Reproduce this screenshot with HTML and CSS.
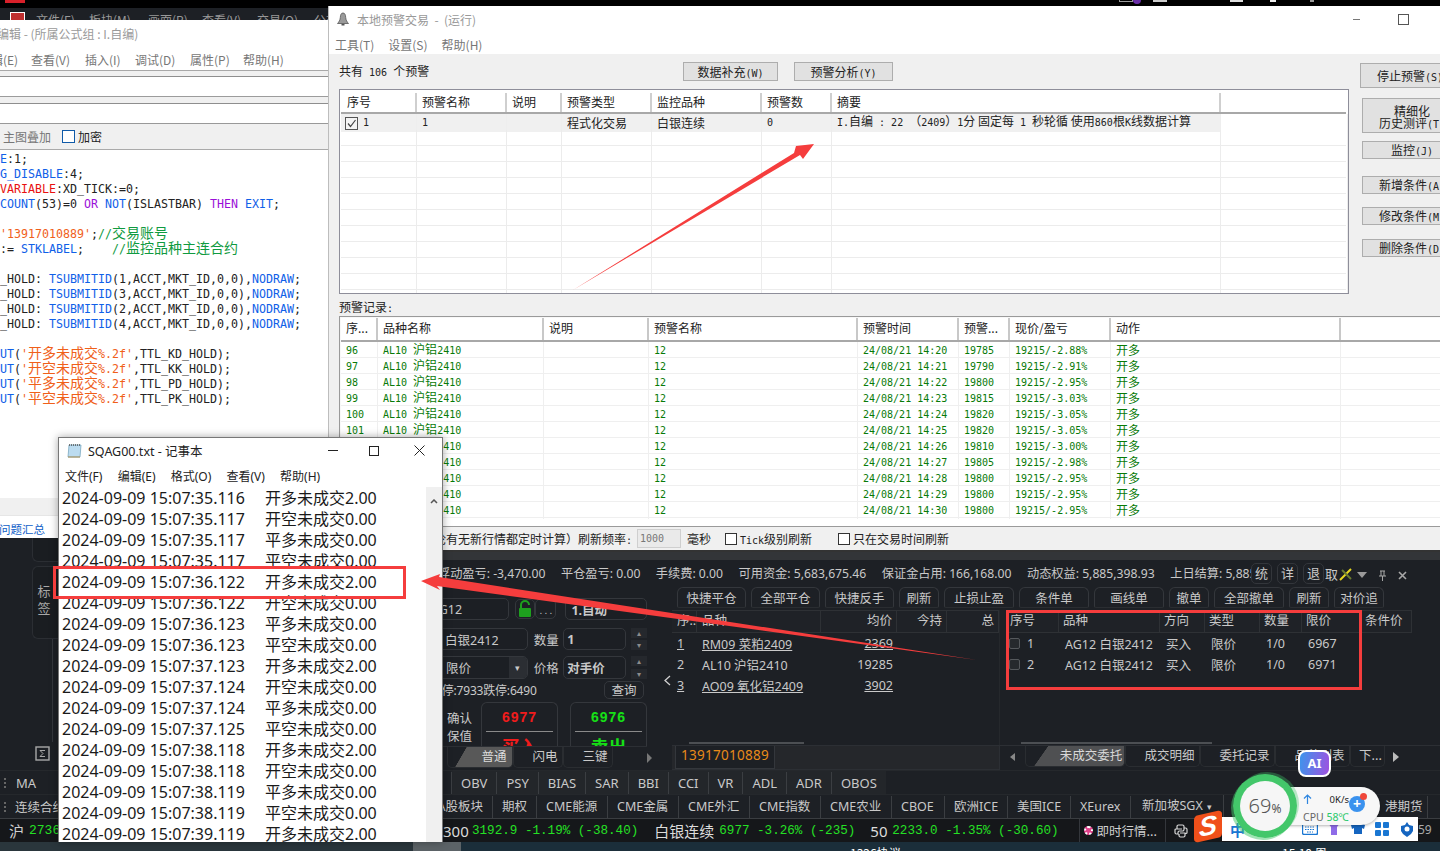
FILE: index.html
```html
<!DOCTYPE html>
<html lang="zh-CN">
<head>
<meta charset="utf-8">
<title>本地预警交易</title>
<link rel="stylesheet" href="styles.css">
</head>
<body>
<div class="desk">
  <div class="topbar">
    <span class="top-red"></span><span class="top-fill"></span>
    <span class="top-a"></span><span class="top-dot"></span><span class="top-b"></span><span class="top-c"></span><span class="top-d"></span><span class="top-e"></span>
  </div>

  <!-- back trading application -->
  <section class="trade">
    <nav class="trade-menu">
      <span class="app-ico"></span><span class="tm1">文件(F)</span><span class="tm2">板块(M)</span><span class="tm3">画面(P)</span><span class="tm4">查看(V)</span><span class="tm5">交易(O)</span><span class="tm6">公式</span>
    </nav>
    <div class="trade-body">
      <aside class="leftbar">
        <div class="lb-tab lb-tab-top"></div>
        <div class="lb-tab"><span>标</span><span>签</span></div>
        <div class="lb-rule"></div>
        <div class="lb-icon"><svg width="15" height="15" viewBox="0 0 15 15"><rect x="1" y="1" width="13" height="13" fill="none" stroke="#a8a8a8" stroke-width="1.4"/><path d="M10 4.5H5L8 7.5 5 10.5H10" fill="none" stroke="#a8a8a8"/></svg></div>
      </aside>
      <div class="rest">
        <div class="rest-spacer"></div>
        <div class="status-strip"></div>
        <div class="status">
          <span>浮动盈亏: -3,470.00</span><span>平仓盈亏: 0.00</span><span>手续费: 0.00</span><span>可用资金: 5,683,675.46</span><span>保证金占用: 166,168.00</span><span>动态权益: 5,885,398.93</span><span>上日结算: 5,885,398.93</span>
          <div class="chips"><b>统</b><b>详</b><b>退</b><em>取</em>
            <svg class="pen" width="14" height="14" viewBox="0 0 14 14"><path d="M1 13 12 2" stroke="#e8d820" stroke-width="2"/><path d="M3 3l9 9" stroke="#6a7a30" stroke-width="2"/></svg>
          </div>
          <div class="win-ctl">
            <svg width="10" height="6" viewBox="0 0 10 6"><path d="M0 0h10L5 6z" fill="#9a9a9a"/></svg>
            <svg width="9" height="11" viewBox="0 0 9 11"><path d="M2 1h5M3 1v5M6 1v5M1 6h7M4.500 6v5" stroke="#a8a8a8" fill="none"/></svg>
            <svg width="9" height="9" viewBox="0 0 9 9"><path d="M1 1l7 7M8 1 1 8" stroke="#a8a8a8" stroke-width="1.6"/></svg>
          </div>
        </div>
        <div class="panels">
          <div class="form">
            <div class="f-row r1">
              <span class="inp w79">AG12</span><span class="lock"><svg width="16" height="18" viewBox="0 0 16 18"><path d="M4 8V5a4 4 0 0 1 8 0" fill="none" stroke="#1ea01e" stroke-width="2"/><rect x="2" y="8" width="12" height="9" rx="1" fill="#1ea01e"/></svg></span><span class="dots">. . .</span><span class="inp sel82"><strong>1.自动</strong></span>
            </div>
            <div class="f-row r2">
              <span class="inp w99">白银2412</span><label>数量</label><span class="inp w64"><strong>1</strong></span><span class="spin"><i>▴</i><i>▾</i></span>
            </div>
            <div class="f-row r3">
              <span class="inp w99 drop">限价<u>▾</u></span><label>价格</label><span class="inp w64"><strong>对手价</strong></span><span class="spin"><i>▴</i><i>▾</i></span>
            </div>
            <div class="f-row r4"><span class="limit">涨停:7933跌停:6490</span><span class="query">查询</span></div>
            <div class="f-row r5">
              <div class="confirm"><span>确认</span><span>保值</span></div>
              <div class="deal red"><b>6977</b><hr><strong>买入</strong></div>
              <div class="deal green"><b>6976</b><hr><strong>卖出</strong></div>
            </div>
            <div class="f-tabs"><span class="ft on">普通</span><span class="ft">闪电</span><span class="ft">三键</span><span class="ft-arrow"></span></div>
          </div>
          <div class="gutter"><svg width="7" height="11" viewBox="0 0 7 11"><path d="M6 1 1 5.500 6 10" fill="none" stroke="#d0d0d0" stroke-width="1.300"/></svg></div>
          <div class="right-area">
            <div class="actions">
              <span class="act w69">快捷平仓</span><span class="act w69">全部平仓</span><span class="act w69">快捷反手</span><span class="act w40">刷新</span><span class="act w70">止损止盈</span><span class="act w70">条件单</span><span class="act w70">画线单</span><span class="act w40">撤单</span><span class="act w70">全部撤单</span><span class="act w40">刷新</span><span class="act w50">对价追</span>
            </div>
            <div class="tables">
              <div class="pos">
                <div class="pos-row head"><span>序...</span><span>品种</span><span class="num">均价</span><span class="num">今持</span><span class="num">总</span></div>
                <div class="pos-row"><span class="link">1</span><span class="link">RM09 菜粕2409</span><span class="num"><span class="link">2369</span></span><span></span><span></span></div>
                <div class="pos-row"><span>2</span><span>AL10 沪铝2410</span><span class="num">19285</span><span></span><span></span></div>
                <div class="pos-row"><span class="link">3</span><span class="link">AO09 氧化铝2409</span><span class="num"><span class="link">3902</span></span><span></span><span></span></div>
                <div class="sb sb1"></div>
              </div>
              <div class="ord">
                <div class="ord-row head"><span>序号</span><span>品种</span><span>方向</span><span>类型</span><span>数量</span><span>限价</span><span>条件价</span></div>
                <div class="ord-row"><span class="idx"><i></i>1</span><span>AG12 白银2412</span><span>买入</span><span>限价</span><span>1/0</span><span>6967</span><span></span></div>
                <div class="ord-row"><span class="idx"><i></i>2</span><span>AG12 白银2412</span><span>买入</span><span>限价</span><span>1/0</span><span>6971</span><span></span></div>
                <div class="sb sb2"></div>
              </div>
            </div>
            <div class="btabs">
              <div class="acct"><span>13917010889</span></div>
              <div class="otabs">
                <span class="tri-l"></span><span class="ot on">未成交委托</span><span class="ot w75">成交明细</span><span class="ot w75">委托记录</span><span class="ot w75">品种列表</span><span class="ot w35">下...</span><span class="tri-r"></span>
              </div>
            </div>
          </div>
        </div>
      </div>
    </div>
    <div class="indbar"><span class="grip"></span><span class="ma">MA</span><div class="inds"><span>OBV</span><span>PSY</span><span>BIAS</span><span>SAR</span><span>BBI</span><span>CCI</span><span>VR</span><span>ADL</span><span>ADR</span><span>OBOS</span></div></div>
    <div class="catbar"><span class="grip"></span><span class="cont">连续合约</span><div class="cats"><span class="c0">A股板块</span><span class="k44">期权</span><span>CME能源</span><span>CME金属</span><span>CME外汇</span><span>CME指数</span><span>CME农业</span><span class="k53">CBOE</span><span class="k63">欧洲ICE</span><span class="k63">美国ICE</span><span class="k60">XEurex</span><span class="c1">新加坡SGX<u>▾</u></span><span class="c2"></span><span class="c3">港期货</span></div></div>
    <div class="ticker">
      <span class="t-hu">沪</span><span class="t-g t-first">2736</span>
      <span class="t-w t-300">300</span><span class="t-g">3192.9 -1.19% (-38.40)</span>
      <span class="t-w t-ag">白银连续</span><span class="t-g">6977 -3.26% (-235)</span>
      <span class="t-w t-50">50</span><span class="t-g">2233.0 -1.35% (-30.60)</span>
      <span class="t-live"><i></i>即时行情...</span>
      <span class="t-py"><svg width="14" height="14" viewBox="0 0 14 14"><path d="M7 1H4.500A1.500 1.500 0 0 0 3 2.500V5h5M3 5H2a1 1 0 0 0-1 1v2.500A1.500 1.500 0 0 0 2.500 10H4V8.500A1.500 1.500 0 0 1 5.500 7h3A1.500 1.500 0 0 0 10 5.500v-3A1.500 1.500 0 0 0 8.500 1H7M10 4h1.500A1.500 1.500 0 0 1 13 5.500v3a1 1 0 0 1-1 1h-1M6 9h5v2.500A1.500 1.500 0 0 1 9.500 13h-3A1.500 1.500 0 0 1 5 11.500V10" fill="none" stroke="#d8d8d8" stroke-width="1.200"/></svg></span>
    </div>
  </section>
  <div class="taskbar"><span class="tb-a"></span><span class="tb-b"></span><span class="tb-c"><span class="tb-t1">1326协议</span><span class="tb-t2">15:10 周</span></span></div>

  <!-- formula editor -->
  <section class="editor">
    <div class="ed-title">编辑 - (所属公式组 : I.自编)</div>
    <div class="ed-menu"><span class="em0">辑(E)</span><span>查看(V)</span><span>插入(I)</span><span>调试(D)</span><span>属性(P)</span><span>帮助(H)</span></div>
    <div class="ed-tool1"></div>
    <div class="ed-tool2"></div>
    <div class="ed-tool3"></div>
    <div class="ed-opts"><span class="gray">主图叠加</span><span class="cb"></span><span>加密</span></div>
    <pre class="code"><span class="b">E</span>:1;
<span class="b">G_DISABLE</span>:4;
<span class="r">VARIABLE</span>:XD_TICK:=0;
<span class="b">COUNT</span>(53)=0 <span class="p">OR</span> <span class="b">NOT</span>(ISLASTBAR) <span class="p">THEN</span> <span class="b">EXIT</span>;

<span class="o">'13917010889'</span>;<span class="g">//<span class="c">交易账号</span></span>
:= <span class="b">STKLABEL</span>;    <span class="g">//<span class="c">监控品种主连合约</span></span>

_HOLD: <span class="b">TSUBMITID</span>(1,ACCT,MKT_ID,0,0),<span class="b">NODRAW</span>;
_HOLD: <span class="b">TSUBMITID</span>(3,ACCT,MKT_ID,0,0),<span class="b">NODRAW</span>;
_HOLD: <span class="b">TSUBMITID</span>(2,ACCT,MKT_ID,0,0),<span class="b">NODRAW</span>;
_HOLD: <span class="b">TSUBMITID</span>(4,ACCT,MKT_ID,0,0),<span class="b">NODRAW</span>;

<span class="b">UT</span>(<span class="o">'<span class="c">开多未成交</span>%.2f'</span>,TTL_KD_HOLD);
<span class="b">UT</span>(<span class="o">'<span class="c">开空未成交</span>%.2f'</span>,TTL_KK_HOLD);
<span class="b">UT</span>(<span class="o">'<span class="c">平多未成交</span>%.2f'</span>,TTL_PD_HOLD);
<span class="b">UT</span>(<span class="o">'<span class="c">平空未成交</span>%.2f'</span>,TTL_PK_HOLD);</pre>
    <div class="ed-strip"></div>
    <div class="ed-foot">问题汇总</div>
  </section>

  <!-- alert window -->
  <section class="alert">
    <div class="al-title">
      <svg class="bell" width="14" height="14" viewBox="0 0 14 14"><path d="M7 1c-2 0-2.500 2-2.700 4.500C4.100 8 3 10 1.500 11.500h11C11 10 9.900 8 9.700 5.500 9.500 3 9 1 7 1z" fill="#9a9a9a" stroke="#555" stroke-width=".8"/><rect x="5.500" y="12" width="3" height="1.500" fill="#555"/></svg>
      <span class="al-name">本地预警交易  -  (运行)</span>
      <span class="al-min"></span><span class="al-max"></span>
    </div>
    <div class="al-menu"><span>工具(T)</span><span>设置(S)</span><span>帮助(H)</span></div>
    <div class="al-content">
      <div class="al-upper">
        <div class="al-left">
          <div class="al-count">
            <span class="al-total">共有<span class="m"> 106 </span>个预警</span>
            <span class="gbtn gb95">数据补充<span class="m">(W)</span></span><span class="gbtn gb99">预警分析<span class="m">(Y)</span></span>
          </div>
          <div class="t1">
            <div class="t1-row head"><span>序号</span><span>预警名称</span><span>说明</span><span>预警类型</span><span>监控品种</span><span>预警数</span><span>摘要</span><span></span></div>
            <div class="t1-row sel"><span class="chk"><svg width="13" height="13" viewBox="0 0 13 13"><rect x=".5" y=".5" width="12" height="12" fill="#f4f4f4" stroke="#555"/><path d="M3 6.500 5.500 9.500 10.500 3" fill="none" stroke="#444" stroke-width="1.200"/></svg><span class="m">1</span></span><span class="m">1</span><span></span><span>程式化交易</span><span>白银连续</span><span class="m">0</span><span class="m sum">I.<span class="c">自编</span> : 22 <span class="c">（</span>2409<span class="c">）</span>1<span class="c">分 固定每</span> 1 <span class="c">秒轮循 使用</span>860<span class="c">根</span>K<span class="c">线数据计算</span></span><span></span></div>
            <div class="t1-empty"><i></i><i></i><i></i><i></i><i></i><i></i><i></i><i></i></div>
          </div>
        </div>
        <div class="al-btns">
          <span class="gbtn rb h25 wide">停止预警<span class="m">(S)</span></span>
          <span class="gbtn rb h35">精细化<br>历史测评<span class="m">(T)</span></span>
          <span class="gbtn rb h18">监控<span class="m">(J)</span></span>
          <span class="gbtn rb h18 mt17">新增条件<span class="m">(A)</span></span>
          <span class="gbtn rb h18 mt13">修改条件<span class="m">(M)</span></span>
          <span class="gbtn rb h18 mt14">删除条件<span class="m">(D)</span></span>
        </div>
      </div>
      <div class="al-label">预警记录<span class="m">:</span></div>
      <div class="t2">
        <div class="t2-row head"><span>序...</span><span>品种名称</span><span>说明</span><span>预警名称</span><span>预警时间</span><span>预警...</span><span>现价/盈亏</span><span>动作</span></div>
        <div class="t2-row"><span>96</span><span>AL10 <span class="c">沪铝</span>2410</span><span></span><span>12</span><span>24/08/21 14:20</span><span>19785</span><span>19215/-2.88%</span><span class="c">开多</span></div>
        <div class="t2-row"><span>97</span><span>AL10 <span class="c">沪铝</span>2410</span><span></span><span>12</span><span>24/08/21 14:21</span><span>19790</span><span>19215/-2.91%</span><span class="c">开多</span></div>
        <div class="t2-row"><span>98</span><span>AL10 <span class="c">沪铝</span>2410</span><span></span><span>12</span><span>24/08/21 14:22</span><span>19800</span><span>19215/-2.95%</span><span class="c">开多</span></div>
        <div class="t2-row"><span>99</span><span>AL10 <span class="c">沪铝</span>2410</span><span></span><span>12</span><span>24/08/21 14:23</span><span>19815</span><span>19215/-3.03%</span><span class="c">开多</span></div>
        <div class="t2-row"><span>100</span><span>AL10 <span class="c">沪铝</span>2410</span><span></span><span>12</span><span>24/08/21 14:24</span><span>19820</span><span>19215/-3.05%</span><span class="c">开多</span></div>
        <div class="t2-row"><span>101</span><span>AL10 <span class="c">沪铝</span>2410</span><span></span><span>12</span><span>24/08/21 14:25</span><span>19820</span><span>19215/-3.05%</span><span class="c">开多</span></div>
        <div class="t2-row"><span>102</span><span>AL10 <span class="c">沪铝</span>2410</span><span></span><span>12</span><span>24/08/21 14:26</span><span>19810</span><span>19215/-3.00%</span><span class="c">开多</span></div>
        <div class="t2-row"><span>103</span><span>AL10 <span class="c">沪铝</span>2410</span><span></span><span>12</span><span>24/08/21 14:27</span><span>19805</span><span>19215/-2.98%</span><span class="c">开多</span></div>
        <div class="t2-row"><span>104</span><span>AL10 <span class="c">沪铝</span>2410</span><span></span><span>12</span><span>24/08/21 14:28</span><span>19800</span><span>19215/-2.95%</span><span class="c">开多</span></div>
        <div class="t2-row"><span>105</span><span>AL10 <span class="c">沪铝</span>2410</span><span></span><span>12</span><span>24/08/21 14:29</span><span>19800</span><span>19215/-2.95%</span><span class="c">开多</span></div>
        <div class="t2-row"><span>106</span><span>AL10 <span class="c">沪铝</span>2410</span><span></span><span>12</span><span>24/08/21 14:30</span><span>19800</span><span>19215/-2.95%</span><span class="c">开多</span></div>
      </div>
      <div class="al-foot">
        <span class="af-text">（不论有无新行情都定时计算）刷新频率<span class="m">:</span></span><span class="af-inp">1000</span><span class="af-ms">毫秒</span>
        <span class="af-cb af-c1"></span><span><span class="m">Tick</span>级别刷新</span>
        <span class="af-cb af-c2"></span><span>只在交易时间刷新</span>
      </div>
    </div>
  </section>

  <!-- notepad -->
  <section class="note">
    <div class="nt-title">
      <svg width="15" height="15" viewBox="0 0 15 15"><path d="M2 2h12l-1 12H1z" fill="#bcdcf0" stroke="#7aa8c0" stroke-width=".8"/><path d="M2 2h12" stroke="#555" stroke-width="1.500" stroke-dasharray="1 1"/><path d="M1 14h12" stroke="#b09050"/></svg>
      <span class="nt-name">SQAG00.txt - 记事本</span>
      <span class="nt-min"></span><span class="nt-max"></span>
      <svg class="nt-x" width="11" height="11" viewBox="0 0 11 11"><path d="M.5.5l10 10M10.500.5l-10 10" stroke="#222"/></svg>
    </div>
    <div class="nt-menu"><span>文件(F)</span><span>编辑(E)</span><span>格式(O)</span><span>查看(V)</span><span>帮助(H)</span></div>
    <div class="nt-body">
      <div class="nt-text">
        <p><span>2024-09-09 15:07:35.116</span>开多未成交2.00</p>
        <p><span>2024-09-09 15:07:35.117</span>开空未成交0.00</p>
        <p><span>2024-09-09 15:07:35.117</span>平多未成交0.00</p>
        <p><span>2024-09-09 15:07:35.117</span>平空未成交0.00</p>
        <p><span>2024-09-09 15:07:36.122</span>开多未成交2.00</p>
        <p><span>2024-09-09 15:07:36.122</span>开空未成交0.00</p>
        <p><span>2024-09-09 15:07:36.123</span>平多未成交0.00</p>
        <p><span>2024-09-09 15:07:36.123</span>平空未成交0.00</p>
        <p><span>2024-09-09 15:07:37.123</span>开多未成交2.00</p>
        <p><span>2024-09-09 15:07:37.124</span>开空未成交0.00</p>
        <p><span>2024-09-09 15:07:37.124</span>平多未成交0.00</p>
        <p><span>2024-09-09 15:07:37.125</span>平空未成交0.00</p>
        <p><span>2024-09-09 15:07:38.118</span>开多未成交2.00</p>
        <p><span>2024-09-09 15:07:38.118</span>开空未成交0.00</p>
        <p><span>2024-09-09 15:07:38.119</span>平多未成交0.00</p>
        <p><span>2024-09-09 15:07:38.119</span>平空未成交0.00</p>
        <p><span>2024-09-09 15:07:39.119</span>开多未成交2.00</p>
      </div>
      <div class="nt-scroll"><svg width="8" height="5" viewBox="0 0 8 5"><path d="M1 4 4 1l3 3" fill="none" stroke="#555" stroke-width="1.500"/></svg></div>
    </div>
  </section>

  <!-- annotation overlay -->
  <svg class="marks" width="1440" height="851" viewBox="0 0 1440 851">
    <polygon points="573,290 794,153 796,146 814,144 803,159 800,155" fill="#f53d3d"/>
    <polygon points="421,581 440,574 439,577 977,660 437,586 440,590" fill="#f53d3d"/>
    <rect x="54.500" y="567.500" width="350" height="30" fill="none" stroke="#f53d3d" stroke-width="3"/>
    <rect x="1007.500" y="611.500" width="353" height="77" fill="none" stroke="#f53d3d" stroke-width="3"/>
  </svg>

  <!-- tray, sogou and monitor widget -->
  <div class="tray">
    <span class="tr-zh">中</span>
    <svg class="tr-kb" width="16" height="12" viewBox="0 0 16 12"><rect x=".5" y=".5" width="15" height="11" rx="1.500" fill="none" stroke="#1976d2" stroke-width="1.400"/><path d="M3 4h10M3 6.500h10M5 9h6" stroke="#1976d2" stroke-dasharray="1.500 1"/></svg>
    <svg class="tr-shirt" width="14" height="14" viewBox="0 0 14 14"><path d="M1 1h12l-3 4v8H4V5z" fill="#8e6be8"/></svg>
    <svg class="tr-mask" width="16" height="14" viewBox="0 0 16 14"><path d="M1 3l3-2h8l3 2-1 4-2-1v6H4V6L2 7z" fill="#1565c0"/></svg>
    <svg class="tr-grid" width="14" height="14" viewBox="0 0 14 14"><g fill="#1976d2"><rect width="6" height="6" rx="1"/><rect x="8" width="6" height="6" rx="1"/><rect y="8" width="6" height="6" rx="1"/><rect x="8" y="8" width="6" height="6" rx="1"/></g></svg>
    <svg class="tr-gear" width="14" height="15" viewBox="0 0 14 15"><path d="M7 0 9 3l4 1v5l-2 3-4 3-4-3-2-3V4l4-1z" fill="#1565c0"/><circle cx="7" cy="7" r="2.500" fill="#fff"/></svg>
  </div>
  <span class="tray-num">59</span>
  <div class="sogou"><span>S</span></div>
  <div class="ai-badge">AI</div>
  <div class="monitor">
    <div class="mon-pill">
      <div class="mon-net"><svg width="9" height="10" viewBox="0 0 9 10"><path d="M4.500 10V1M1 4.500 4.500 1 8 4.500" fill="none" stroke="#2f86e0" stroke-width="1.200"/></svg><span>0K/s</span></div>
      <div class="mon-cpu">CPU <b>58℃</b></div>
      <div class="mon-plus"><span>+</span><i></i></div>
    </div>
    <div class="mon-ring"><div class="mon-disc"><span class="pct">69</span><span class="pc">%</span></div></div>
  </div>
</div>
</body>
</html>
```
FILE: styles.css
```css
* { box-sizing: border-box; }
html, body { margin: 0; padding: 0; height: 100%; overflow: hidden; background: #000; }
body { font-family: "Noto Sans CJK SC", "Noto Sans", sans-serif; font-size: 12px; }
.desk { position: relative; width: 1440px; height: 851px; overflow: hidden; background: #000; display: flex; flex-direction: column; }
p { margin: 0; }
i, em { font-style: normal; }
.m { font-family: "DejaVu Sans Mono", monospace; font-size: 10px; white-space: pre; }
.c { font-family: "Noto Sans CJK SC", sans-serif; font-size: 12px; line-height: 0; }

/* top strip */
.topbar { height: 8px; flex: none; display: flex; align-items: flex-start; position: relative; }
.topbar span { height: 2px; display: block; }
.top-red { margin-left: 5px; width: 20px; height: 3px !important; background: #d8202a; }
.top-fill { flex: 1; }
.top-a { width: 14px; border: 1px solid #999; border-top: 0; height: 1px; }
.top-dot { width: 8px; height: 4px !important; background: #6a2ea8; border-radius: 0 0 5px 5px; margin-right: 12px; }
.top-b { width: 14px; background: #ccc; margin-right: 63px; }
.top-c { width: 13px; background: #ddd; margin-right: 27px; }
.top-d { width: 6px; background: #eee; margin-right: 34px; }
.top-e { width: 4px; background: #999; margin-right: 126px; }

/* back trading application */
.trade { height: 834px; flex: none; display: flex; flex-direction: column; background: #1d2025; color: #c9c9c9; }
.trade-menu { height: 12px; flex: none; display: flex; overflow: hidden; line-height: 24px; color: #999; font-size: 12px; }
.trade-menu span { flex: none; }
.app-ico { width: 15px; height: 12px; margin: 4px 11px 0 10px; background: #c03030; border: 1px solid #fff; }
.tm1 { width: 53px; } .tm2 { width: 59px; } .tm3 { width: 54px; } .tm4 { width: 55px; } .tm5 { width: 57px; }
.trade-body { height: 750px; flex: none; display: flex; }
.leftbar { width: 58px; flex: none; display: flex; flex-direction: column; align-items: flex-end; padding-top: 518px; position: relative; }
.lb-tab { width: 26px; height: 74px; border: 1px solid #2b2e33; border-right: 0; border-radius: 6px 0 0 6px; background: #1a1d21; display: flex; flex-direction: column; align-items: center; justify-content: center; font-size: 13px; line-height: 17px; color: #a8a8a8; padding: 0 3px 6px 0; }
.lb-tab-top { height: 24px; border-radius: 0 0 0 6px; border-top: 0; margin-bottom: 4px; }
.lb-rule { width: 1px; height: 105px; background: #34373c; margin-right: 5px; }
.lb-icon { width: 23px; height: 24px; margin-top: 4px; padding: 0 0 0 0; align-self: flex-start; margin-left: 35px; }
.rest { width: 1382px; flex: none; display: flex; flex-direction: column; }
.rest-spacer { flex: 1; }
.status-strip { height: 8px; flex: none; background: #333538; }
.status { height: 27px; flex: none; display: flex; gap: 15.5px; align-items: center; padding: 0 0 2px 380px; font-family: "Noto Sans", "Noto Sans CJK SC", sans-serif; font-size: 12.2px; white-space: nowrap; position: relative; overflow: hidden; }
.chips { position: absolute; left: 1193px; top: 3px; height: 21px; display: flex; gap: 5px; align-items: center; background: #1d2025; padding-right: 18px; }
.chips b { width: 21px; height: 21px; border: 1px solid #33363b; border-radius: 5px; font-weight: 400; font-size: 13px; line-height: 19px; text-align: center; }
.chips em { margin-left: -4px; font-size: 13px; }
.pen { margin-left: -4px; }
.win-ctl { position: absolute; left: 1299px; top: 0; width: 90px; height: 27px; display: flex; align-items: center; gap: 11px; padding-left: 0; background: #1d2025; padding-top: 3px; }

.panels { height: 183px; flex: none; display: flex; }
.form { width: 606px; flex: none; padding: 11px 17px 0 372px; display: flex; flex-direction: column; white-space: nowrap; }
.f-row { display: flex; flex: none; align-items: center; }
.r1 { height: 22px; margin-bottom: 8px; }
.r2 { height: 22px; margin-bottom: 6px; }
.r3 { height: 23px; }
.r4 { height: 18px; justify-content: space-between; margin-top: 2px; padding-left: 0; padding-right: 3px; }
.r5 { height: 44px; margin-top: 3px; padding-left: 17px; }
.inp { height: 100%; border: 1px solid #34373c; border-radius: 5px; display: flex; align-items: center; padding: 0 2px; font-size: 12.5px; overflow: hidden; justify-content: flex-start; background: #1c1f24; font-family: "Noto Sans", "Noto Sans CJK SC", sans-serif; }
.w79 { width: 79px; margin-right: 6px; padding-left: 0; }
.w99 { width: 99px; margin-right: 6px; padding-left: 0; }
.w64 { width: 64px; margin-right: 5px; padding-left: 3px; }
.sel82 { width: 82px; margin-left: 9px; padding-left: 5px; }
.drop { position: relative; padding-left: 15px; height: 23px; }
.drop u { position: absolute; right: 0; top: 0; bottom: 0; width: 18px; background: #2b2e33; text-decoration: none; text-align: center; font-size: 9px; line-height: 22px; }
.r2 .w99 { padding-left: 14px; }
.lock, .dots { width: 21px; height: 20px; border: 1px solid #34373c; border-radius: 5px; display: flex; align-items: center; justify-content: center; color: #b8b8b8; font-size: 10px; }
.f-row label { width: 30px; font-size: 12.5px; }
.spin { width: 16px; height: 100%; display: flex; flex-direction: column; justify-content: space-between; }
.spin i { height: 10px; background: #25282d; color: #8b8b8b; font-size: 8px; line-height: 10px; text-align: center; }
.limit { font-size: 12px; letter-spacing: -.2px; font-family: "Noto Sans", "Noto Sans CJK SC", sans-serif; }
.query { width: 40px; height: 18px; border: 1px solid #34373c; border-radius: 5px; text-align: center; line-height: 16px; font-size: 12.500px; }
.confirm { width: 34px; display: flex; flex-direction: column; font-size: 12.500px; line-height: 18px; padding-top: 7px; height: 100%; flex: none; }
.deal { width: 77px; height: 44px; flex: none; overflow: hidden; border: 1px solid #34373c; border-bottom: 0; border-radius: 6px 6px 0 0; text-align: center; font-family: "Liberation Sans", "Noto Sans CJK SC", sans-serif; margin-right: 12px; padding: 6px 4px 0; }
.deal b { display: block; font-size: 14px; line-height: 16px; letter-spacing: 1px; }
.deal hr { margin: 6px 0 6px; border: 0; height: 1px; background: #8a8a8a; }
.deal strong { font-size: 18px; line-height: 20px; display: block; }
.red { color: #f01c1c; } .green { color: #16e016; }
.f-tabs { height: 22px; flex: none; display: flex; padding-left: 17px; font-size: 12.500px; border-top: 1px solid #2c2f34; align-items: stretch; position: relative; }
.ft { width: 50px; text-align: center; line-height: 17px; padding-left: 14px; border: 1px solid #2a2d31; border-top: 0; border-radius: 0 0 5px 5px; flex: none; }
.ft.on { width: 66px; background: linear-gradient(120deg, #1d2025 0 16px, #585858 16.500px); padding-left: 28px; color: #dcdcdc; }
.ft-arrow { width: 0; height: 0; border-left: 5px solid #777; border-top: 5px solid transparent; border-bottom: 5px solid transparent; margin: 6px 0 0 34px; }

.gutter { width: 8px; flex: none; padding-top: 85px; }
.right-area { flex: 1; display: flex; flex-direction: column; min-width: 0; }
.actions { height: 21px; flex: none; display: flex; gap: 5px; padding-left: 5px; margin-bottom: 2px; }
.act { border: 1px solid #34373c; border-bottom-color: #2a2d31; border-radius: 6px 6px 2px 2px; text-align: center; font-size: 12.500px; line-height: 20px; flex: none; }
.w69 { width: 69px; } .w40 { width: 40px; } .w70 { width: 70px; } .w50 { width: 50px; }
.tables { height: 135px; flex: none; display: flex; gap: 6px; font-family: "Noto Sans", "Noto Sans CJK SC", sans-serif; font-size: 12.500px; }
.pos, .ord { position: relative; height: 135px; flex: none; }
.pos { width: 328px; border-right: 1px solid #25282c; }
.ord { width: 406px; }
.pos-row { display: grid; grid-template-columns: 25px 124px 76px 50px 52px; height: 21px; align-items: center; white-space: nowrap; }
.ord-row { display: grid; grid-template-columns: 53px 101px 45px 55px 42px 59px 51px; height: 21px; align-items: center; white-space: nowrap; }
.head { height: 23px !important; }
.pos-row.head, .ord-row.head { border-top: 1px solid #2e3135; border-bottom: 1px solid #2e3135; margin-bottom: 0; background: #1f2227; }
.pos-row.head span, .ord-row.head span { height: 21px; line-height: 20px; border-right: 1px solid #2e3135; padding: 0 4px; overflow: hidden; }
.pos-row span:first-child, .pos-row span:nth-child(2) { padding-left: 5px; }
.num { text-align: right; padding-right: 4px; }
.link { text-decoration: underline; }
.ord-row span { padding-left: 6px; }
.idx { display: flex; align-items: center; gap: 7px; padding-left: 3px !important; }
.idx i { width: 11px; height: 11px; border: 1px solid #55585c; border-radius: 2px; background: #26292d; }
.sb { position: absolute; top: 132px; height: 2px; background: #4c4f53; }
.sb1 { left: 17px; width: 115px; }
.sb2 { left: 15px; width: 191px; }
.btabs { height: 25px; flex: none; display: flex; gap: 6px; border-top: 1px solid #2c2f34; }
.acct { width: 328px; flex: none; padding-left: 3px; border: 1px solid #2c2f34; border-width: 0 1px 1px 0; background: #25272b; }
.acct span { display: block; width: 100px; height: 23px; background: #1d2025; border: 1px solid #34373c; border-width: 0 1px 1px; color: #e88a1a; font-size: 13.500px; line-height: 19px; text-align: center; font-family: "Noto Sans", sans-serif; letter-spacing: .3px; }
.otabs { flex: 1; display: flex; font-size: 12.500px; line-height: 18px; white-space: nowrap; align-items: flex-start; }
.tri-l { width: 0; height: 0; border-right: 5px solid #888; border-top: 4px solid transparent; border-bottom: 4px solid transparent; margin: 7px 0 0 4px; }
.tri-r { width: 0; height: 0; border-left: 6px solid #bbb; border-top: 5px solid transparent; border-bottom: 5px solid transparent; margin: 6px 0 0 8px; }
.ot { height: 21px; text-align: center; border: 1px solid #2a2d31; border-top: 0; border-radius: 0 0 5px 5px; flex: none; padding-left: 14px; }
.ot.on { width: 100px; margin-left: 10px; background: linear-gradient(125deg, #1d2025 0 18px, #4f5052 18.500px); padding-left: 32px; color: #d8d8d8; }
.w75 { width: 75px; } .w35 { width: 35px; padding-left: 6px; }

.indbar { height: 24px; flex: none; display: flex; align-items: center; font-family: "Noto Sans", sans-serif; font-size: 13px; border-top: 1px solid #25282c; }
.grip { width: 2px; height: 10px; margin-left: 4px; border-left: 2px dotted #666; flex: none; }
.ma { width: 445px; padding-left: 10px; flex: none; }
.inds { display: flex; height: 24px; background: #23262a; align-items: center; }
.inds span { padding: 0 9px; border-left: 1px solid #3b3e42; line-height: 22px; }
.catbar { height: 25px; flex: none; display: flex; align-items: center; font-size: 12.500px; border-top: 1px solid #25282c; border-bottom: 1px solid #3a3d41; white-space: nowrap; }
.cont { width: 431px; padding-left: 9px; flex: none; }
.cats { display: flex; align-items: center; font-family: "Noto Sans", "Noto Sans CJK SC", sans-serif; }
.cats span { width: 71px; padding: 0 0 0 9px; border-right: 1px solid #3b3e42; line-height: 22px; flex: none; }
.cats .c0 { padding: 0 9px 0 0; width: 56px; text-align: right; }
.cats .k44 { width: 44px; } .cats .k53 { width: 53px; } .cats .k63 { width: 63px; } .cats .k60 { width: 60px; }
.cats .c1 { width: 93px; padding-left: 11px; }
.c1 u { text-decoration: none; font-size: 9px; margin-left: 4px; }
.cats .c2 { width: 157px; }
.cats .c3 { width: 47px; padding: 0 0 0 4px; }
.ticker { height: 23px; flex: none; display: flex; align-items: center; white-space: nowrap; background: #15171a; font-family: "Liberation Mono", monospace; font-size: 12.600px; }
.t-g { color: #25e025; flex: none; }
.t-w { color: #dcdcdc; font-family: "Noto Sans", "Noto Sans CJK SC", sans-serif; font-size: 15px; flex: none; }
.t-hu { color: #cfcfcf; font-size: 15px; margin-left: 9px; width: 20px; flex: none; font-family: "Noto Sans CJK SC", sans-serif; }
.t-first { width: 414px; font-size: 13px; }
.t-300 { width: 29px; }
.t-ag { margin-left: 16px; width: 65px; }
.t-50 { margin-left: 15px; width: 22px; }
.t-live { margin-left: 20px; height: 23px; width: 87px; padding-left: 4px; border-left: 1px solid #34373c; border-right: 1px solid #34373c; display: flex; align-items: center; gap: 4px; font-family: "Noto Sans CJK SC", sans-serif; font-size: 12.500px; color: #d0d0d0; flex: none; }
.t-live i { width: 9px; height: 9px; border-radius: 50%; background: #e0408a; flex: none; border: 2px dotted #fff; }
.t-py { margin-left: 8px; display: flex; }
.taskbar { height: 9px; flex: none; display: flex; overflow: hidden; color: #fff; line-height: 22px; }
.tb-a { width: 413px; background: #2a363c; }
.tb-b { width: 48px; background: #5c6367; }
.tb-c { flex: 1; background: #1b2e3a; position: relative; }
.tb-t1 { position: absolute; left: 389px; top: 0; }
.tb-t2 { position: absolute; left: 821px; top: 0; }

/* editor */
.editor { position: absolute; left: 0; top: 20px; width: 328px; height: 518px; background: #fff; display: flex; flex-direction: column; overflow: hidden; color: #333; }
.ed-title { height: 28px; flex: none; line-height: 28px; margin-left: -3px; color: #9a9a9a; font-size: 12px; white-space: nowrap; }
.ed-menu { height: 20px; flex: none; display: flex; line-height: 24px; color: #777; font-size: 12px; white-space: nowrap; margin-left: -9px; }
.ed-menu span { width: 54px; flex: none; }
.em0 { width: 40px !important; }
.ed-menu span:nth-child(3) { width: 50px; }
.ed-menu span:nth-child(4) { width: 55px; }
.ed-menu span:nth-child(5) { width: 53px; }
.ed-tool1 { height: 7px; flex: none; background: #f0f0f0; border-top: 1px solid #a8a8a8; border-bottom: 1px solid #8e8e8e; margin-top: 2px; }
.ed-tool2 { height: 19px; flex: none; background: #fff; }
.ed-tool3 { height: 27px; flex: none; background: #fff; border-top: 1px solid #9c9c9c; box-shadow: inset 0 6px 0 #f0f0f0, inset 0 7px 0 #8e8e8e; }
.ed-opts { height: 27px; flex: none; display: flex; align-items: center; background: #f0f0f0; border-top: 1px solid #999; border-bottom: 1px solid #aaa; padding-left: 3px; font-size: 12px; color: #222; }
.gray { color: #777; width: 59px; }
.cb { width: 13px; height: 13px; border: 1px solid #0f5aa8; margin-right: 3px; background: #fff; }
.code { margin: 0; flex: 1; min-height: 0; background: #fff; font-family: "DejaVu Sans Mono", monospace; font-size: 11.630px; line-height: 15px; color: #222; padding-top: 2px; overflow: hidden; }
.code .c { font-size: 14px; line-height: 0; }
.b { color: #1060e8; } .r { color: #e81010; } .p { color: #9a10d8; } .o { color: #f0601a; } .g { color: #109a40; }
.ed-strip { height: 17px; flex: none; background: #f0f0f0; }
.ed-foot { height: 23px; flex: none; color: #1060c8; font-size: 11.500px; line-height: 27px; margin-left: -1px; border-top: 1px solid #e6e6e6; }

/* alert window */
.alert { position: absolute; left: 328px; top: 6px; width: 1112px; height: 546px; background: #fff; display: flex; flex-direction: column; overflow: hidden; color: #222; border-left: 1px solid #bdbdbd; }
.al-title { height: 24px; flex: none; display: flex; align-items: center; padding: 2px 0 0 7px; color: #999; white-space: pre; }
.bell { margin-right: 7px; }
.al-name { flex: 1; }
.al-min { width: 7px; height: 1px; background: #777; margin-right: 38px; }
.al-max { width: 11px; height: 11px; border: 1px solid #555; margin-right: 31px; }
.al-menu { height: 24px; flex: none; display: flex; gap: 14px; padding: 2px 0 0 6px; color: #777; line-height: 26px; }
.al-content { flex: 1; background: #f0f0f0; padding-left: 10px; display: flex; flex-direction: column; min-height: 0; }
.al-upper { height: 240px; flex: none; display: flex; }
.al-left { width: 1010px; flex: none; display: flex; flex-direction: column; }
.al-count { height: 35px; flex: none; display: flex; align-items: flex-start; padding-top: 8px; }
.al-total { width: 344px; line-height: 17px; flex: none; }
.gbtn { background: #e1e1e1; border: 1px solid #adadad; text-align: center; display: block; line-height: 17px; white-space: nowrap; }
.gb95 { width: 95px; height: 19px; margin-right: 16px; }
.gb99 { width: 99px; height: 19px; }
.t1 { height: 205px; flex: none; border: 1px solid #8e8e9a; background: #fff; padding: 3px 2px 0 1px; overflow: hidden; }
.t1-row { display: grid; grid-template-columns: 76px 90px 55px 90px 110px 70px 389px 127px; height: 16px; line-height: 18px; white-space: pre; }
.t1-row.head { height: 21px !important; border-bottom: 2px solid #a8a8a8; line-height: 17px; }
.t1-row.head > span { border-right: 2px solid #cfcfcf; padding-left: 5px; }
.t1-row.head > span:first-child { padding-left: 6px; }
.t1-row.head > span:last-child { border: 0; }
.t1-row.sel > span { background: #f0f0f0; padding-left: 5px; border-right: 1px solid #eee; }
.t1-row.sel > span:last-child { background: #fff; }
.t1-row .chk { display: flex; align-items: center; gap: 5px; padding-left: 4px !important; }
.t1-empty { height: 170px; display: grid; grid-template-columns: 76px 90px 55px 90px 110px 70px 389px 127px; background: repeating-linear-gradient(to bottom, #fff 0 15px, #ececec 15px 16px); }
.t1-empty i { border-right: 1px solid #ececec; }
.al-btns { flex: none; display: flex; flex-direction: column; padding: 9px 0 0 13px; gap: 8px; margin-left: 0; }
.rb { width: 100px; display: block; line-height: 12px; }
.h25 { height: 25px; line-height: 24px; margin-bottom: 2px; }
.wide { margin-left: -2px; }
.h35 { height: 35px; line-height: 12px; padding-top: 6px; }
.h18 { height: 18px; line-height: 16px; }
.mt17 { margin-top: 9px; } .mt13 { margin-top: 5px; } .mt14 { margin-top: 6px; }
.al-label { height: 22px; flex: none; line-height: 26px; }
.t2 { height: 211px; flex: none; border: 1px solid #9a9a9a; border-right: 0; padding: 1px 0 0 1px; box-shadow: inset 1px 1px 0 #f8f8f8; background: #fff; overflow: hidden; outline: 0; }
.t2-row { display: grid; grid-template-columns: 37px 166px 105px 209px 101px 51px 101px 230px; height: 16px; white-space: pre; font-family: "DejaVu Sans Mono", monospace; font-size: 10px; color: #087a08; border-bottom: 1px solid #efefef; line-height: 17px; }
.t2-row > span { border-right: 1px solid #efefef; padding-left: 5px; height: 100%; }
.t2-row > .c { line-height: 16px; }
.t2-row.head { height: 24px !important; font-family: "Noto Sans CJK SC", sans-serif; font-size: 12px; color: #222; border-bottom: 2px solid #a8a8a8; line-height: 20px; }
.t2-row.head > span { border-right: 2px solid #c8c8c8; }
.al-foot { flex: 1; display: flex; align-items: center; white-space: nowrap; min-height: 0; border-bottom: 2px solid #333; }
.af-text { width: 293px; flex: none; text-align: right; overflow: hidden; }
.af-inp { width: 44px; height: 19px; flex: none; margin-left: 5px; border: 1px solid #cfcfcf; background: #eaeaea; color: #777; font-family: "DejaVu Sans Mono", monospace; font-size: 10px; line-height: 17px; padding-left: 2px; }
.af-ms { margin-left: 6px; width: 38px; flex: none; }
.af-cb { width: 12px; height: 12px; border: 1px solid #333; background: #fff; flex: none; margin-right: 3px; }
.af-c2 { margin-left: 26px; }

/* notepad */
.note { position: absolute; left: 58px; top: 437px; width: 385px; height: 405px; background: #fff; border: 1px solid #777; border-bottom: 0; display: flex; flex-direction: column; overflow: hidden; color: #222; box-shadow: 0 0 8px rgba(0,0,0,.35); }
.nt-title { height: 28px; flex: none; display: flex; align-items: center; padding: 0 0 3px 8px; }
.nt-name { flex: 1; margin-left: 6px; font-family: "Noto Sans", "Noto Sans CJK SC", sans-serif; font-size: 12.500px; }
.nt-min { width: 10px; height: 1px; background: #222; margin-right: 31px; }
.nt-max { width: 10px; height: 10px; border: 1px solid #222; margin-right: 35px; }
.nt-x { margin-right: 17px; }
.nt-menu { height: 21px; flex: none; display: flex; gap: 15.200px; padding-left: 6px; font-family: "Noto Sans", "Noto Sans CJK SC", sans-serif; font-size: 12px; line-height: 22px; white-space: nowrap; }
.nt-body { flex: 1; display: flex; min-height: 0; }
.nt-text { flex: 1; padding: 1px 0 0 3px; font-family: "Noto Sans", "Noto Sans CJK SC", sans-serif; font-size: 16px; line-height: 21px; white-space: nowrap; overflow: hidden; color: #1a1a1a; }
.nt-text span { display: inline-block; width: 203px; }
.nt-scroll { width: 16px; flex: none; background: #f0f0f0; text-align: center; padding-top: 3px; }

.marks { position: absolute; left: 0; top: 0; pointer-events: none; }

/* tray and widgets */
.tray { position: absolute; left: 1222px; top: 817px; width: 196px; height: 24px; background: #fff; display: flex; align-items: center; }
.tr-zh { color: #1976d2; font-weight: 700; font-size: 15px; margin-left: 8px; width: 72px; }
.tr-kb { margin-right: 9px; }
.tr-shirt { margin-right: 9px; }
.tr-mask { margin-right: 9px; }
.tr-grid { margin-right: 11px; }
.tray-num { position: absolute; left: 1418px; top: 821px; color: #aaa; font-family: "Noto Sans", sans-serif; font-size: 12px; }
.sogou { position: absolute; left: 1194px; top: 813px; width: 28px; height: 27px; background: #f0501a; border-radius: 4px; transform: skewY(-12deg); color: #fff; font: italic 700 27px/27px "Liberation Sans", sans-serif; text-align: center; }
.ai-badge { position: absolute; left: 1298px; top: 750px; width: 33px; height: 27px; border: 2px solid #fff; border-radius: 8px; background: linear-gradient(100deg, #3c96ec, #a050e0); color: #fff; font: 700 13px/23px "Noto Sans", sans-serif; text-align: center; }
.monitor { position: absolute; left: 1233px; top: 771px; width: 150px; height: 70px; }
.mon-ring { position: absolute; left: 0; top: 3px; width: 64px; height: 64px; border-radius: 50%; background: radial-gradient(circle at 50% 50%, #43c76a 0 70%, #6dd48d 100%); padding: 7px; box-shadow: -2px 2px 0 rgba(67,199,106,.5), 2px -2px 0 rgba(67,199,106,.35); }
.mon-disc { width: 50px; height: 50px; border-radius: 50%; background: #f6f6f6; color: #555; display: flex; align-items: baseline; justify-content: center; font-family: "Noto Sans", sans-serif; line-height: 50px; }
.pct { font-size: 20px; font-weight: 300; }
.pc { font-size: 12px; }
.mon-pill { position: absolute; left: 50px; top: 16px; width: 97px; height: 38px; border-radius: 0 19px 19px 0; background: #f7f7f7; box-shadow: 0 1px 3px rgba(0,0,0,.3); padding: 5px 0 0 20px; font-family: "Noto Sans", sans-serif; font-size: 10px; color: #333; }
.mon-net { display: flex; justify-content: space-between; width: 46px; align-items: center; height: 14px; font-size: 9.500px; color: #222; }
.mon-cpu { font-size: 10.500px; color: #666; margin-top: 4px; }
.mon-cpu b { font-weight: 400; color: #28c86a; }
.mon-plus { position: absolute; left: 66px; top: 9px; width: 16px; height: 16px; border-radius: 50%; background: #3a92ee; color: #fff; font: 700 14px/15px "Noto Sans", sans-serif; text-align: center; }
.mon-plus i { position: absolute; right: -2px; top: -3px; width: 7px; height: 7px; border-radius: 50%; background: #f0483a; }
```
